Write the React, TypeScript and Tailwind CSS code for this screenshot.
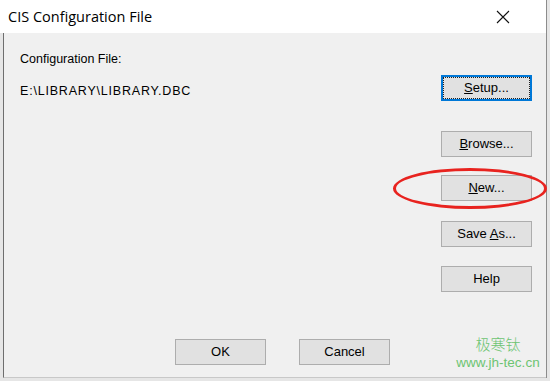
export default function App() {
  const btn =
    'flex h-[26px] w-[91px] items-center justify-center border border-[#adadad] bg-[#e1e1e1] text-[13px] text-black'

  return (
    <div className="relative h-[381px] w-[550px] overflow-hidden bg-[#e6e6e6] font-['Liberation_Sans',sans-serif]">
      <div className="flex h-[378px] w-[547px] flex-col border-r border-[#8c8c8c]">
        {/* title bar */}
        <div className="flex h-[33px] shrink-0 items-center justify-between bg-white pl-[8px] pr-[36px]">
          <span className="font-['Open_Sans',sans-serif] text-[14.5px] text-black">CIS Configuration File</span>
          <svg width="14" height="14" viewBox="0 0 14 14" className="mt-px">
            <path d="M1 1L13 13M13 1L1 13" stroke="#111" strokeWidth="1.1" />
          </svg>
        </div>

        {/* body */}
        <div className="ml-[3px] flex flex-1 flex-col border-b border-l border-[#6e6e6e] border-b-[#c8c8c8] bg-[#f0f0f0]">
          <div className="flex flex-1">
            <div className="flex flex-1 flex-col pl-[16px] pt-[17px] text-[12.5px] text-black">
              <span>Configuration File:</span>
              <span className="mt-[13px] tracking-[0.8px]">E:\LIBRARY\LIBRARY.DBC</span>
            </div>

            <div className="flex flex-col pr-[14px] pt-[42px]">
              <div className="flex h-[26px] w-[91px] items-center justify-center border-2 border-[#0078d7] bg-[#e1e1e1] text-[13px]">
                <div className="flex h-full w-full items-center justify-center border border-dotted border-[#222]">
                  <span><span className="underline">S</span>etup...</span>
                </div>
              </div>
              <div className={`${btn} mt-[30px]`}>
                <span><span className="underline">B</span>rowse...</span>
              </div>
              <div className={`${btn} mt-[18px]`}>
                <span><span className="underline">N</span>ew...</span>
              </div>
              <div className={`${btn} mt-[20px]`}>
                <span>Save <span className="underline">A</span>s...</span>
              </div>
              <div className={`${btn} mt-[19px]`}>Help</div>
            </div>
          </div>

          <div className="flex h-[38px] items-start gap-[33px] pl-[171px]">
            <div className={btn}>OK</div>
            <div className={btn}>Cancel</div>
          </div>
        </div>
      </div>

      {/* red highlight */}
      <div className="absolute left-[393px] top-[168px] h-[41px] w-[154px] rounded-[50%] border-[3px] border-[#e8231f]" />

      {/* watermark */}
      <div className="absolute left-[450px] top-[334px] flex w-[96px] flex-col items-center text-[13.5px] leading-[19px] text-[#6dc472]">
        <span className="font-['Noto_Sans_CJK_SC',sans-serif] text-[15px] font-light">极寒钛</span>
        <span className="font-['Liberation_Sans',sans-serif]">www.jh-tec.cn</span>
      </div>
    </div>
  )
}
